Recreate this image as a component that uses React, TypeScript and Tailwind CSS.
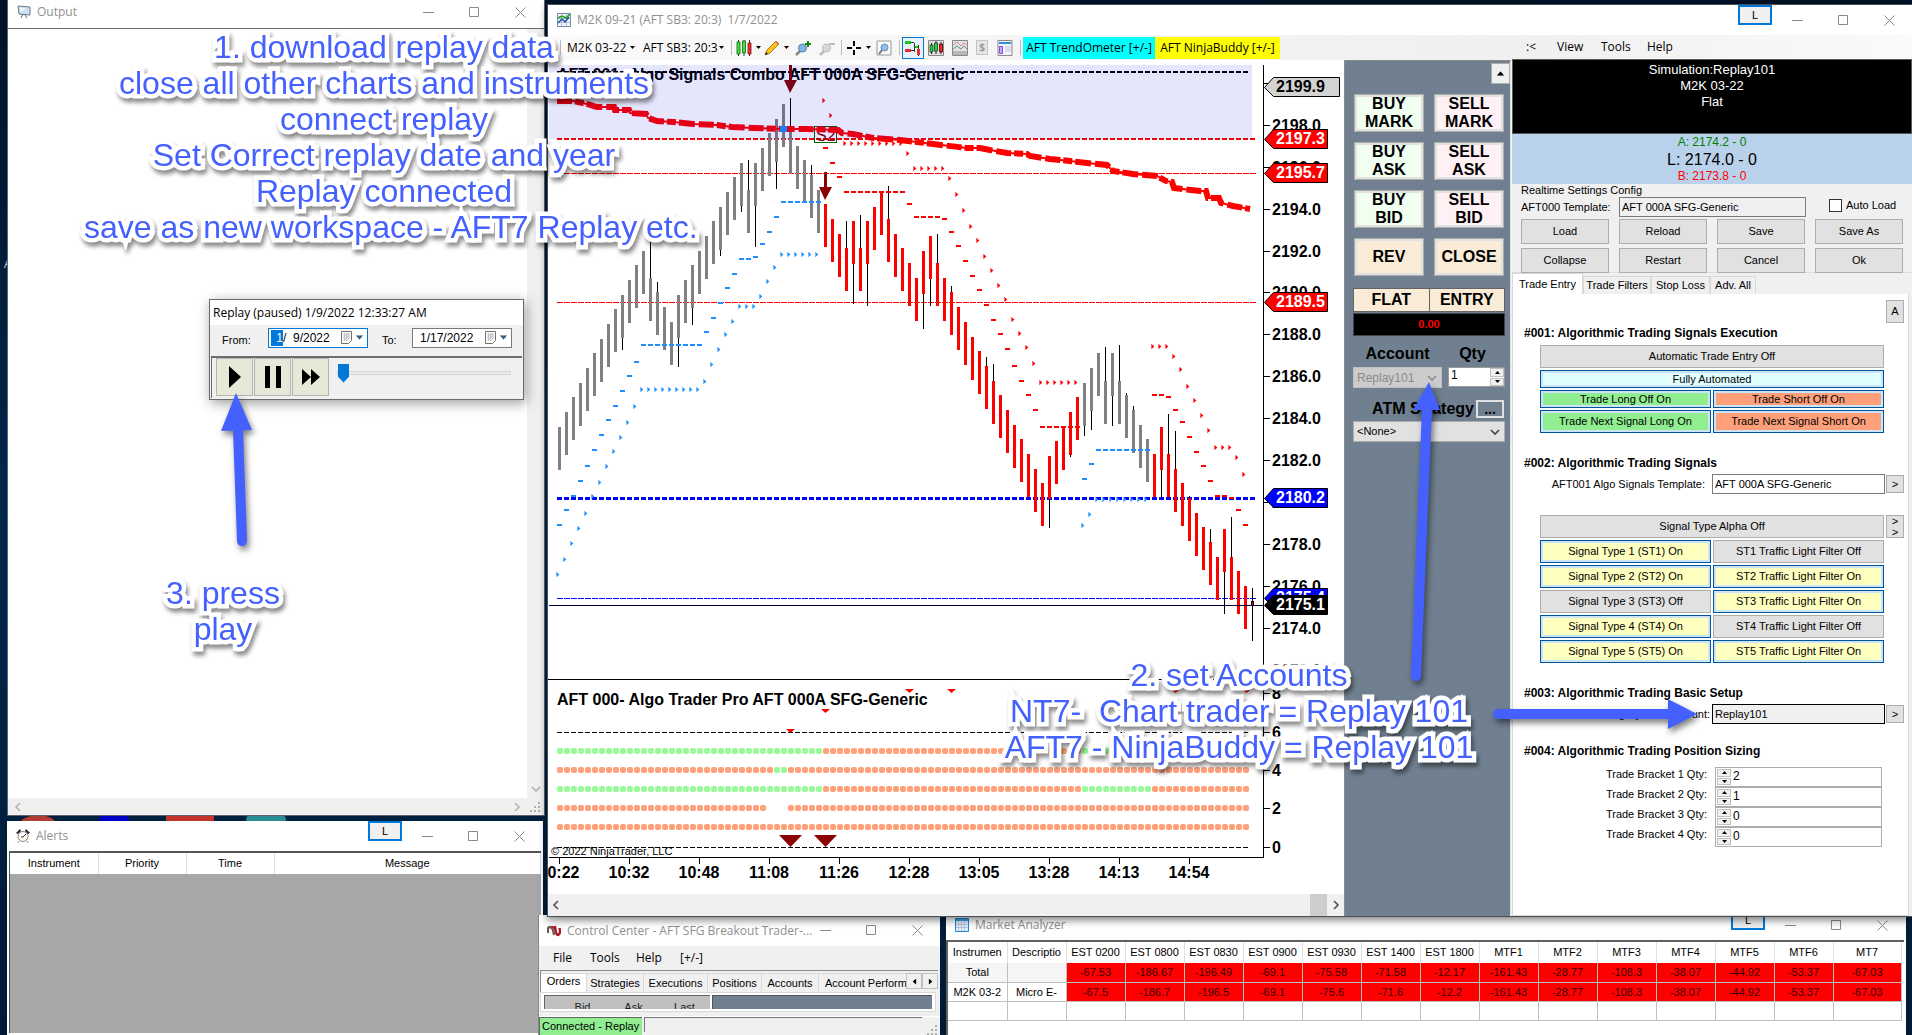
import React from 'react';
import clsx from 'clsx';

const UI = "font-['Open_Sans',sans-serif]";
const MS = "font-['Liberation_Sans',Arial,sans-serif]";

// ---------- chart data ----------

const STEP = 7;
const X0 = 559;

// top of every bar, left to right
const barTops = [
  427, 412, 397, 383, 368, 353, 339, 324, 309, 295, 280, 265, 251, 278, 292, 307, 322, 295, 280, 265,
  251, 236, 221, 207, 192, 177, 163, 190, 163, 148, 133, 119, 104, 131, 146, 160, 175, 190, 204, 219,
  234, 248, 221, 248, 221, 207, 192, 219, 234, 248, 263, 278, 251, 236, 263, 278, 292, 307, 322, 337,
  351, 366, 381, 395, 410, 425, 439, 454, 469, 483, 456, 441, 427, 412, 397, 383, 368, 353, 381, 353,
  381, 395, 410, 425, 439, 454, 427, 454, 469, 483, 498, 513, 527, 542, 557, 529, 557, 571, 586,
];

const wicks: [number, number][] = [
  [9, 350], [13, 240], [14, 282], [17, 367], [19, 325], [23, 256], [26, 212], [27, 160], [28, 247], [31, 189],
  [33, 98], [36, 165], [41, 221], [42, 304], [43, 215], [44, 306], [47, 186], [52, 329], [53, 306], [54, 234],
  [56, 286], [61, 357], [62, 364], [70, 528], [73, 457], [75, 436], [76, 430], [78, 347], [79, 426], [80, 345],
  [81, 393], [82, 406], [86, 498], [87, 414], [88, 431], [90, 496], [93, 529], [95, 614], [96, 517],
];

// [first bar, y values]
const blueDashes: [number, number[]][] = [
  [0, [525, 510, 496, 481, 466, 450, 435, 420, 406, 391, 376, 362, 345, 345, 345, 345, 345, 345, 345, 345, 345, 332, 318, 303, 288, 274, 259, 259, 257, 244, 232, 217, 202, 202, 202, 202, 202, 202]],
  [75, [479, 464, 450, 450, 450, 450, 450, 450, 450, 450]],
];
const blueMarks: [number, number[]][] = [
  [0, [574, 559, 543, 528, 513, 496, 482, 466, 451, 437, 422, 406, 389, 389, 389, 389, 389, 389, 389, 389, 389, 381, 364, 349, 334, 321, 306, 306, 306, 296, 281, 267, 254, 254, 254, 254, 254, 254]],
  [75, [525, 514, 499, 499, 499, 499, 499, 499, 499, 499]],
];
const redDashes: [number, number[]][] = [
  [38, [148, 163, 177, 192, 192, 192, 192, 192, 192, 192, 192, 192, 204, 217, 217, 217, 217, 219, 232, 246, 261, 276, 290, 305, 320, 334, 349, 366, 381, 395, 410, 427, 427, 427, 427, 427, 427]],
  [85, [395, 395, 397, 410, 422, 437, 452, 466, 481, 496, 496, 498, 510, 525]],
];
const redMarks: [number, number[]][] = [
  [38, [100, 115, 129, 143, 143, 143, 143, 143, 143, 143, 143, 143, 153, 168, 168, 168, 168, 168, 178, 194, 210, 226, 240, 256, 270, 285, 299, 319, 333, 347, 363, 382, 382, 382, 382, 382, 382]],
  [85, [346, 346, 346, 356, 369, 386, 400, 415, 430, 447, 447, 447, 457, 474]],
];

const trend =
  '557,101 573,101 587,104 597,107 614,107 615,110 629,110 630,113 646,114 648,118 657,121 673,122 693,124 717,125 732,127 753,128 783,129 807,129 838,130 842,133 853,134 873,138 900,140 933,144 967,148 980,148 990,150 1007,153 1027,154 1030,156 1050,159 1070,161 1087,163 1107,165 1113,171 1133,174 1157,176 1166,181 1172,182 1174,188 1200,191 1206,191 1208,198 1219,198 1221,203 1233,206 1250,209';

const axisLabels: [number, string][] = [
  [125, '2198.0'], [167, '2196.0'], [209, '2194.0'], [251, '2192.0'], [292, '2190.0'], [334, '2188.0'],
  [376, '2186.0'], [418, '2184.0'], [460, '2182.0'], [502, '2180.0'], [544, '2178.0'], [586, '2176.0'], [628, '2174.0'], [670, '2172.0'],
];

const priceTags = [
  { y: 87, text: '2199.9', fill: '#d3d3d3', color: '#000', right: 1340 },
  { y: 139, text: '2197.3', fill: '#f00', color: '#fff', right: 1328 },
  { y: 173, text: '2195.7', fill: '#f00', color: '#fff', right: 1328 },
  { y: 302, text: '2189.5', fill: '#f00', color: '#fff', right: 1328 },
  { y: 498, text: '2180.2', fill: '#00f', color: '#fff', right: 1328 },
  { y: 598, text: '2175.4', fill: '#00f', color: '#fff', right: 1328 },
  { y: 605, text: '2175.1', fill: '#000', color: '#fff', right: 1328 },
];

const times = ['10:22', '10:32', '10:48', '11:08', '11:26', '12:28', '13:05', '13:28', '14:13', '14:54'];

const inLong = (i: number) => i < 38 || (i >= 75 && i <= 84);
const dotRows = [
  { y: 751, color: (i: number) => (inLong(i) ? '#98fb98' : '#ffa07a') },
  { y: 770, color: (i: number) => (i === 31 || i === 32 ? '#98fb98' : '#ffa07a') },
  { y: 789, color: (i: number) => (inLong(i) ? '#98fb98' : '#ffa07a') },
  { y: 808, color: (i: number) => (i >= 30 && i <= 32 ? 'none' : '#ffa07a') },
  { y: 827, color: () => '#ffa07a' },
];

function Dashes({ data, fill }: { data: [number, number[]][]; fill: string }) {
  return (
    <g fill={fill}>
      {data.map(([start, ys]) =>
        ys.map((y, k) => <rect key={start + k} x={X0 + (start + k) * STEP - 2} y={y - 1} width="5" height="2" />)
      )}
    </g>
  );
}

function Marks({ data, fill, edge }: { data: [number, number[]][]; fill: string; edge: string }) {
  return (
    <g>
      {data.map(([start, ys]) =>
        ys.map((y, k) => {
          const x = X0 + (start + k) * STEP - 3;
          return (
            <g key={start + k}>
              <rect x={x} y={y - 2} width="1" height="5" fill={edge} />
              <path d={`M${x + 0.6} ${y - 2}l2.8 2.5l-2.8 2.5z`} fill={fill} />
            </g>
          );
        })
      )}
    </g>
  );
}

function PriceChart() {
  return (
    <svg viewBox="548 60 796 834" className="block h-[834px] w-[796px] shrink-0 bg-white" fontFamily="Liberation Sans, Arial, sans-serif">
      <text x="557" y="80" fontSize="16" fontWeight="700">AFT 001- Algo Signals Combo AFT 000A SFG-Generic</text>

      <g shapeRendering="crispEdges">
        <path d="M557 72H1248" stroke="#000" strokeWidth="2" strokeDasharray="5 2" />
        <path d="M557 139H1255" stroke="#f00" strokeWidth="2" strokeDasharray="5 2" />
        <path d="M557 173.5H1256M557 302.5H1256" stroke="#f00" strokeDasharray="6 1" />
        <path d="M557 498.5H1255" stroke="#00f" strokeWidth="3" strokeDasharray="5 2" />
        <path d="M557 598.5H1256" stroke="#00f" strokeDasharray="6 1" />

        {barTops.map((top, i) => (
          <rect key={i} x={X0 + i * STEP - 1} y={top} width="3" height="43" fill={inLong(i) ? '#808080' : '#f00'} />
        ))}
        {wicks.map(([i, end]) => {
          const top = barTops[i];
          const up = end < top;
          return <rect key={i} x={X0 + i * STEP} y={up ? end : top + 43} width="1" height={up ? top - end : end - top - 43} />;
        })}
        <rect x="1252" y="588" width="1" height="53" />
        <rect x="1251" y="601" width="3" height="5" />
        <rect x="1252" y="602" width="1" height="3" fill="#f00" />
        <path d="M549 605.5H1264" stroke="#000040" />

        <Dashes data={blueDashes} fill="#1e90ff" />
        <Dashes data={redDashes} fill="#f00" />
      </g>
      <Marks data={blueMarks} fill="#1e90ff" edge="#a5d3ff" />
      <Marks data={redMarks} fill="#f00" edge="#ff9c9c" />

      <rect x="814.5" y="126.5" width="22" height="16" fill="none" stroke="#006400" />
      <text x="816" y="141" fontSize="16" fill="#8b0000">S2</text>
      <polyline points={trend} fill="none" stroke="#f00" strokeWidth="6" strokeDasharray="15 3 9 3 16 4" />
      <polyline points={trend} fill="none" stroke="#f00" strokeWidth="2" />
      <rect x="780" y="126" width="7" height="6" fill="#1e90ff" />

      <g fill="#8b0000">
        <path d="M789 65h3v15h5l-7 13l-6 -13h5z" />
        <path d="M824 172h3v15h5l-7 13l-6 -13h5z" />
      </g>
      <rect x="549" y="65" width="703" height="74" fill="#0000e6" fillOpacity="0.1" />

      {/* lower indicator panel */}
      <path d="M548 679.5H1344" stroke="#000" />
      <text x="557" y="705" fontSize="16" fontWeight="700">AFT 000- Algo Trader Pro AFT 000A SFG-Generic</text>
      <path d="M557 732.5H1249M557 847.5H1249" stroke="#000" strokeDasharray="5 2" shapeRendering="crispEdges" />
      {dotRows.map((row) => (
        <g key={row.y}>
          {Array.from({ length: 99 }, (_, i) => (
            <rect key={i} x={X0 + i * STEP - 2} y={row.y - 3} width="6" height="6" rx="2" fill={row.color(i)} />
          ))}
        </g>
      ))}
      {[[790, 731], [825, 711], [909, 691], [951, 691], [1175, 691], [1246, 691]].map(([x, y]) => (
        <path key={x} d={`M${x - 4} ${y - 2}h9l-4.5 4z`} fill="#f00" />
      ))}
      <path d="M779 835h23l-11.500 12zM814 835h23l-11.500 12z" fill="#8b0000" />
      <text x="551" y="855" fontSize="11">© 2022 NinjaTrader, LLC</text>

      {/* axes */}
      <g stroke="#000" shapeRendering="crispEdges">
        <path d="M1263.5 65V858M549 857.5H1264" />
        {times.map((t, k) => (
          <path key={t} d={`M${559.5 + k * 70} 858v6`} />
        ))}
        {axisLabels.map(([y]) => (
          <path key={y} d={`M1264 ${y + 0.5}h6`} />
        ))}
        {[693, 732, 770, 808, 847].map((y) => (
          <path key={y} d={`M1264 ${y + 0.5}h6`} />
        ))}
        <path d="M1264 83.5h6" />
      </g>
      <g fontSize="16" fontWeight="700">
        {times.map((t, k) => (
          <text key={t} x={559 + k * 70} y="878" textAnchor="middle">{t}</text>
        ))}
        {axisLabels.map(([y, label]) => (
          <text key={label} x="1272" y={y + 6}>{label}</text>
        ))}
        {[[693, 8], [732, 6], [770, 4], [808, 2], [847, 0]].map(([y, n]) => (
          <text key={n} x="1272" y={y + 6}>{n}</text>
        ))}
        {priceTags.map((tag) => (
          <g key={tag.text}>
            <path d={`M1264.5 ${tag.y + 0.5}L1273.5 ${tag.y - 9.5}H${tag.right - 0.5}V${tag.y + 9.5}H1273.5Z`} fill={tag.fill} stroke="#000" />
            <text x="1276" y={tag.y + 5} fill={tag.color}>{tag.text}</text>
          </g>
        ))}
      </g>
    </svg>
  );
}

// ---------- window parts ----------

function WinButtons({ gap = 'gap-[35px]' }: { gap?: string }) {
  return (
    <div className={clsx('flex items-center text-[#8a8a8a]', gap)}>
      <button aria-label="Minimize" className="h-[11px] w-[11px]">
        <svg viewBox="0 0 11 11" className="h-[11px] w-[11px]"><path d="M0 5.5h11" stroke="currentColor" /></svg>
      </button>
      <button aria-label="Maximize" className="h-[11px] w-[11px]">
        <svg viewBox="0 0 11 11" className="h-[11px] w-[11px]"><path d="M.5 .5h9v9h-9z" fill="none" stroke="currentColor" /></svg>
      </button>
      <button aria-label="Close" className="h-[11px] w-[11px]">
        <svg viewBox="0 0 11 11" className="h-[11px] w-[11px]"><path d="M.5 .5l10 10M10.500 .5l-10 10" stroke="currentColor" /></svg>
      </button>
    </div>
  );
}

function LinkButton() {
  return (
    <button className={clsx('mr-5 h-5 w-[34px] self-start border-2 border-[#0078d7] bg-[#f0f0f0] text-[11px] leading-[15px] text-black', MS)}>L</button>
  );
}

function Caret({ className = 'text-black' }: { className?: string }) {
  return <svg viewBox="0 0 5 3" className={clsx('h-[3px] w-[5px] shrink-0', className)}><path d="M0 0h5L2.500 3z" fill="currentColor" /></svg>;
}

function Chevron({ dir, className }: { dir: 'left' | 'right' | 'down'; className?: string }) {
  const d = { left: 'M7 1L3 5l4 4', right: 'M3 1l4 4l-4 4', down: 'M1 3l4 4l4 -4' }[dir];
  return <svg viewBox="0 0 10 10" className={clsx('h-[10px] w-[10px] shrink-0', className)}><path d={d} fill="none" stroke="currentColor" strokeWidth="1.600" /></svg>;
}

function Grip() {
  return (
    <svg viewBox="0 0 10 10" className="h-[10px] w-[10px]" fill="#b0b0b0">
      <path d="M8 0h2v2h-2zM8 4h2v2h-2zM8 8h2v2h-2zM4 4h2v2h-2zM4 8h2v2h-2zM0 8h2v2h-2z" />
    </svg>
  );
}

function Spin({ className }: { className?: string }) {
  return (
    <span className={clsx('flex w-[14px] shrink-0 flex-col gap-px', className)}>
      <button aria-label="Up" className="flex flex-1 items-center justify-center border border-[#c0c0c0] bg-[#f0f0f0]"><Caret className="rotate-180" /></button>
      <button aria-label="Down" className="flex flex-1 items-center justify-center border border-[#c0c0c0] bg-[#f0f0f0]"><Caret /></button>
    </span>
  );
}

// ---------- Output + Alerts ----------

function OutputWindow() {
  return (
    <section className="absolute top-0 left-[7px] flex h-[816px] w-[538px] flex-col border-x border-b border-[#5a6470] bg-[#f0f0f0]">
      <div className="flex h-7 items-center bg-white pr-[18px] pb-1 pl-[9px]">
        <svg viewBox="0 0 14 14" className="h-[14px] w-[14px]">
          <path d="M1 1l12 1v8l-11 -1z" fill="#cfe0ee" stroke="#6c7c8c" />
          <path d="M6 9l-2 4M8 10l2 3" stroke="#666" />
          <path d="M3 3l6 .5l-5 3z" fill="#fff" />
        </svg>
        <span className="ml-[6px] flex-1 text-xs text-[#8f8f8f]">Output</span>
        <WinButtons />
      </div>
      <div className="flex flex-1 border-t border-[#696969]">
        <div className="flex-1 bg-white" />
        <div className="flex w-[17px] flex-col items-center justify-end pb-1 text-[#b4b4b4]"><Chevron dir="down" /></div>
      </div>
      <div className="flex h-[17px] items-center justify-between pr-1 pl-[5px] text-[#b4b4b4]">
        <Chevron dir="left" />
        <span className="flex items-center gap-2"><Chevron dir="right" /><Grip /></span>
      </div>
    </section>
  );
}

function AlertsWindow() {
  return (
    <section className="absolute top-[821px] bottom-0 left-[7px] flex w-[536px] flex-col bg-white">
      <div className="flex h-[30px] items-center pr-[18px] pl-[9px]">
        <svg viewBox="0 0 14 14" className="h-[14px] w-[14px]">
          <path d="M0 4L4 0L5 2L2 5zM14 4L10 0L9 2L12 5z" fill="#222" />
          <circle cx="7" cy="7.500" r="5" fill="#fff" stroke="#8a8078" />
          <path d="M7 8l3 -3M7 8h-2" stroke="#333" />
          <path d="M3 10l1 1M10 11l1 -1" stroke="#e08020" />
          <path d="M3 12l-1 2M11 12l1 2" stroke="#999" />
        </svg>
        <span className="ml-[6px] flex-1 text-xs text-[#8f8f8f]">Alerts</span>
        <LinkButton />
        <WinButtons />
      </div>
      <div className="mx-[2px] mb-[2px] flex flex-1 flex-col border-t-2 border-l border-[#555] bg-[#a8a8a8]">
        <table className={clsx('w-full table-fixed border-collapse bg-white text-xs', MS)}>
          <colgroup><col className="w-[88px]" /><col className="w-[88px]" /><col className="w-[88px]" /><col /></colgroup>
          <thead>
            <tr className="h-[21px]">
              {['Instrument', 'Priority', 'Time', 'Message'].map((h) => (
                <th key={h} className="border-r border-[#e0e0e0] p-0 text-[11px] font-normal">{h}</th>
              ))}
            </tr>
          </thead>
        </table>
      </div>
    </section>
  );
}

// ---------- Replay ----------

function CalendarButton() {
  return (
    <button aria-label="Open calendar" className="flex items-center gap-[5px]">
      <svg viewBox="0 0 11 13" className="h-[13px] w-[11px]">
        <path d="M.5 .5h10v9l-3 3h-7z" fill="#fff" stroke="#7a6f6a" />
        <path d="M2 3h7M2 5h7M2 7h7M2 9h5M3.500 2v8M5.500 2v8M7.500 2v6" stroke="#a0a8c0" strokeWidth=".6" />
      </svg>
      <Caret className="scale-150 text-[#41597d]" />
    </button>
  );
}

function ReplayWindow() {
  const btn = 'flex h-[38px] w-[37px] items-center justify-center border border-[#b4b4b4] bg-[#e8e8d8]';
  return (
    <section className="absolute top-[299px] left-[209px] w-[315px] border border-[#6a6a6a] bg-[#f0f0f0] shadow-[2px_3px_12px_rgba(0,0,0,0.4)]">
      <h2 className="flex h-[25px] items-center bg-white pl-[3px] text-xs">Replay (paused) 1/9/2022 12:33:27 AM</h2>
      <div className={clsx('flex h-[31px] items-center pl-3 text-xs', MS)}>
        <label htmlFor="from" className="w-[46px] text-[11px]">From:</label>
        <div className="mb-[6px] flex h-5 w-[100px] items-center border border-[#0078d7] bg-white pl-[2px]">
          <input aria-label="From month" defaultValue="1" className="h-4 w-3 bg-[#0078d7] p-0 text-right text-white" />
          <input id="from" defaultValue="/  9/2022" className="w-[58px] p-0" />
          <CalendarButton />
        </div>
        <label htmlFor="to" className="ml-[14px] w-[30px] text-[11px]">To:</label>
        <div className="mb-[6px] flex h-5 w-[100px] items-center border border-[#7a7a7a] bg-white pl-[7px]">
          <input id="to" defaultValue="1/17/2022" className="w-[65px] p-0" />
          <CalendarButton />
        </div>
      </div>
      <div className="mx-px mb-px flex h-[42px] items-start border-t-2 border-l border-[#6d6d6d] pl-1">
        <button aria-label="Play" className={btn}><svg viewBox="0 0 12 22" className="h-[22px] w-3"><path d="M0 0l12 11L0 22z" /></svg></button>
        <button aria-label="Pause" className={clsx(btn, 'ml-px')}><svg viewBox="0 0 16 22" className="h-[22px] w-4"><path d="M0 0h5v22h-5zM11 0h5v22h-5z" /></svg></button>
        <button aria-label="Fast forward" className={clsx(btn, 'ml-px')}><svg viewBox="0 0 18 16" className="h-4 w-[18px]"><path d="M0 0l9 8l-9 8zM9 0l9 8l-9 8z" /></svg></button>
        <input
          type="range"
          aria-label="Replay speed"
          defaultValue={0}
          className="mt-[5px] ml-2 h-[19px] w-[174px] appearance-none bg-transparent [&::-webkit-slider-runnable-track]:h-1 [&::-webkit-slider-runnable-track]:border [&::-webkit-slider-runnable-track]:border-[#d6d6d6] [&::-webkit-slider-runnable-track]:bg-[#e7eaea] [&::-webkit-slider-thumb]:-mt-2 [&::-webkit-slider-thumb]:h-[19px] [&::-webkit-slider-thumb]:w-[11px] [&::-webkit-slider-thumb]:appearance-none [&::-webkit-slider-thumb]:bg-[#0078d7] [&::-webkit-slider-thumb]:[clip-path:polygon(0_0,100%_0,100%_70%,50%_100%,0_70%)]"
        />
      </div>
    </section>
  );
}

// ---------- chart toolbar ----------

function Sep() {
  return <span className="flex w-[6px] shrink-0 justify-center"><span className="h-[15px] w-px bg-[#bdbdbd]" /></span>;
}

function CandleIcon() {
  return (
    <svg viewBox="0 0 16 16" className="h-4 w-4">
      <path d="M2.500 0v16M8 0v16M13.500 0v16" stroke="#333" />
      <path d="M1 2h3v12h-3zM6.500 1h3v12h-3z" fill="#3be83b" stroke="#145c14" strokeWidth=".8" />
      <path d="M12 3h3v11h-3z" fill="#f03030" stroke="#7a1010" strokeWidth=".8" />
    </svg>
  );
}

function Toolbar() {
  const icon = 'flex h-6 shrink-0 items-center justify-center';
  return (
    <div className="flex h-[25px] items-center bg-gradient-to-r from-[#fafafa] to-[#f0f0f0] text-xs">
      <span className="ml-[3px] h-4 border-l-2 border-dotted border-[#aaa]" />
      <span className="ml-[7px] h-[15px] w-px bg-[#bdbdbd]" />
      <button className="flex w-[77px] shrink-0 items-center justify-between pr-[3px] pl-[6px] whitespace-nowrap">M2K 03-22 <Caret /></button>
      <button className="flex w-[90px] shrink-0 items-center justify-between pr-1 pl-[5px] whitespace-nowrap">AFT SB3: 20:3 <Caret /></button>
      <Sep />
      <button aria-label="Chart style" className={clsx(icon, 'w-7 gap-1')}><CandleIcon /><Caret /></button>
      <button aria-label="Draw" className={clsx(icon, 'w-[29px] gap-1')}>
        <svg viewBox="0 0 16 16" className="h-4 w-4"><path d="M1 15l2 -5l9 -9l3 3l-9 9z" fill="#ffc61a" stroke="#b07a10" /><path d="M1 15l1 -3l2 2z" fill="#222" /><path d="M11 2l1 -1l3 3l-1 1z" fill="#e0705a" /></svg>
        <Caret />
      </button>
      <button aria-label="Zoom in" className={clsx(icon, 'w-6')}>
        <svg viewBox="0 0 16 16" className="h-4 w-4"><path d="M1 15l5 -5" stroke="#888" strokeWidth="2.500" /><circle cx="7.500" cy="8" r="4" fill="#7db4e8" stroke="#5f7f9f" /><path d="M13 1v6M10 4h6" stroke="#0c8a0c" strokeWidth="2" /></svg>
      </button>
      <button aria-label="Zoom out" className={clsx(icon, 'w-[23px]')}>
        <svg viewBox="0 0 16 16" className="h-4 w-4"><path d="M1 15l5 -5" stroke="#bbb" strokeWidth="2.500" /><circle cx="7.500" cy="8" r="4" fill="#d8d8d8" stroke="#bbb" /><path d="M10 4h6" stroke="#bbb" strokeWidth="2" /></svg>
      </button>
      <Sep />
      <button aria-label="Crosshair" className={clsx(icon, 'w-7 gap-1')}>
        <svg viewBox="0 0 16 16" className="h-4 w-4"><path d="M8 1v5M8 10v5M1 8h5M10 8h5" stroke="#000" strokeWidth="2" /></svg>
        <Caret />
      </button>
      <button aria-label="Data box" className={clsx(icon, 'w-6')}>
        <svg viewBox="0 0 16 16" className="h-4 w-4"><path d="M1 1h14v14h-14z" fill="#fafafa" stroke="#999" /><path d="M3 14l3 -4" stroke="#777" strokeWidth="2" /><circle cx="8.500" cy="7.500" r="3.500" fill="#8fc0ee" stroke="#6a8cae" /></svg>
      </button>
      <Sep />
      <button aria-label="Chart trader" className="flex h-[22px] w-[22px] shrink-0 items-center justify-center border border-[#0078d7] bg-[#e8f2fb]">
        <svg viewBox="0 0 16 16" className="h-4 w-4"><path d="M0 2.500h9M9.500 3v9M0 10.500h9M13.500 5v11" stroke="#333" fill="none" /><path d="M0 1h6v3h-6z" fill="#18c818" /><path d="M0 9h6v3h-6z" fill="#e03030" /><path d="M10 8h3v-2h-3z" fill="#18c818" /><path d="M12 9h3v6h-3z" fill="#f03030" /></svg>
      </button>
      <button aria-label="Data series" className={clsx(icon, 'w-6')}>
        <svg viewBox="0 0 16 16" className="h-4 w-4"><path d="M.5 .5h15v15h-15z" fill="#ddd" stroke="#888" /><path d="M3.500 3v11M8 1v13M13 2v12" stroke="#222" /><path d="M2 5h3v7h-3zM6.500 3h3v8h-3z" fill="#28d828" stroke="#123" strokeWidth=".7" /><path d="M11.500 4h3v8h-3z" fill="#f02020" stroke="#300" strokeWidth=".7" /></svg>
      </button>
      <button aria-label="Indicators" className={clsx(icon, 'w-[23px]')}>
        <svg viewBox="0 0 16 16" className="h-4 w-4"><path d="M.5 .5h15v15h-15z" fill="#e2e2e2" stroke="#888" /><path d="M1 5l4 -3l4 4l3 -3l3 2" stroke="#d88" fill="none" /><path d="M1 9l4 -3l4 3l3 -3l3 3" stroke="#5a9c80" fill="none" /><path d="M1 11h14v4h-14z" fill="#b8b8b8" /></svg>
      </button>
      <button aria-label="Strategies" className={clsx(icon, 'w-[22px] text-[10px] font-bold text-[#999]')}>
        <span className="h-[15px] w-3 border border-[#c4c4c4] bg-[#e6e6e6] leading-[13px]">$</span>
      </button>
      <button aria-label="Properties" className={clsx(icon, 'w-6')}>
        <svg viewBox="0 0 16 16" className="h-4 w-4"><path d="M1 .5h14v15h-14z" fill="#f4f4fb" stroke="#888" /><path d="M2 2h12v2h-12z" fill="#2f8fd8" /><path d="M2.500 6.500h3v7h-3z" fill="#c8a8ff" stroke="#8848e0" /><path d="M8 7h6M8 9h6M8 11h6" stroke="#c0c4d8" /></svg>
      </button>
      <Sep />
      <button className="h-[22px] w-[132px] shrink-0 bg-[#00ffff] whitespace-nowrap">AFT TrendOmeter [+/-]</button>
      <button className="h-[22px] w-[125px] shrink-0 bg-[#ffff00] whitespace-nowrap">AFT NinjaBuddy [+/-]</button>
    </div>
  );
}

// ---------- chart trader ----------

const orderButtons = [
  { top: 'BUY', bottom: 'MARK', bg: 'bg-[#f0fff0]' },
  { top: 'SELL', bottom: 'MARK', bg: 'bg-[#fff0f5]' },
  { top: 'BUY', bottom: 'ASK', bg: 'bg-[#f0fff0]' },
  { top: 'SELL', bottom: 'ASK', bg: 'bg-[#fff0f5]' },
  { top: 'BUY', bottom: 'BID', bg: 'bg-[#f0fff0]' },
  { top: 'SELL', bottom: 'BID', bg: 'bg-[#fff0f5]' },
  { top: 'REV', bg: 'bg-[#faebd7]' },
  { top: 'CLOSE', bg: 'bg-[#faebd7]' },
];

function ChartTrader() {
  return (
    <aside className={clsx('flex w-[167px] shrink-0 flex-col border-t border-r border-l border-t-[#8a8a8a] border-r-[#e4e4e4] border-l-[#8a8a8a] bg-[#708090] text-base font-bold', MS)}>
      <button aria-label="Scroll up" className="mt-[2px] flex h-[21px] w-[19px] items-center justify-center self-end border border-[#adadad] bg-[#f0f0f0]">
        <Caret className="scale-150 rotate-180" />
      </button>
      <div className="mt-[10px] grid grid-cols-2 gap-[10px] pr-[6px] pl-[9px]">
        {orderButtons.map((b, i) => (
          <button key={i} className={clsx('flex h-[38px] flex-col items-center justify-center border border-[#adadad] leading-[18px] shadow-[inset_0_0_0_2px_#e1e1e1]', b.bg)}>
            <span>{b.top}</span>
            {b.bottom && <span>{b.bottom}</span>}
          </button>
        ))}
      </div>
      <div className="mt-3 mr-[5px] ml-2 flex h-6 border border-[#646464] bg-[#faebd7] leading-[22px]">
        <button className="flex-1 border-r border-[#646464]">FLAT</button>
        <button className="flex-1">ENTRY</button>
      </div>
      <div className="mt-px mr-[5px] ml-2 flex h-[23px] items-center justify-center border border-[#444] bg-black text-[11px] text-[#f00]">0.00</div>

      <div className="mt-[9px] mr-[5px] ml-2 flex">
        <div className="w-[89px]">
          <label htmlFor="account" className="block text-center leading-[18px]">Account</label>
          <div className="mt-1 flex h-[21px] items-center border border-[#bfbfbf] bg-[#ccc] pr-1 text-[#8a8a8a]">
            <select id="account" disabled className="w-full appearance-none pl-[3px] text-xs font-normal">
              <option>Replay101</option>
            </select>
            <Chevron dir="down" />
          </div>
        </div>
        <div className="ml-[6px] flex-1">
          <label htmlFor="qty" className="block pr-2 text-center leading-[18px]">Qty</label>
          <div className="mt-1 flex h-5 border border-[#999] bg-white">
            <input id="qty" defaultValue="1" inputMode="numeric" className="w-full min-w-0 pb-1 pl-[2px] text-xs font-normal" />
            <Spin />
          </div>
        </div>
      </div>

      <div className="mt-3 mr-[6px] ml-2 flex h-[18px] items-center justify-end">
        <label htmlFor="atm">ATM Strategy</label>
        <button className="ml-[2px] h-[18px] w-7 border-2 border-[#e1e1e1] text-sm leading-[8px]">...</button>
      </div>
      <div className="mt-[3px] mr-[5px] ml-2 flex h-[21px] items-center border border-[#adadad] bg-[#e1e1e1] pr-1 text-[#444]">
        <select id="atm" className="w-full appearance-none pl-[3px] text-[11px] font-normal text-black">
          <option>{'<None>'}</option>
        </select>
        <Chevron dir="down" />
      </div>
    </aside>
  );
}

// ---------- NinjaBuddy settings ----------

const tones = {
  off: 'border border-[#adadad] bg-[#e1e1e1]',
  cyan: 'border border-[#005499] bg-[#e0ffff] shadow-[inset_0_0_0_2px_#cce4f7]',
  green: 'border border-[#005499] bg-[#90ee90] shadow-[inset_0_0_0_2px_#cce4f7]',
  salmon: 'border border-[#005499] bg-[#ffa07a] shadow-[inset_0_0_0_2px_#cce4f7]',
  yellow: 'border border-[#005499] bg-[#ffffc0] shadow-[inset_0_0_0_2px_#cce4f7]',
};

function Toggle({ tone, short, wide, children }: { tone: keyof typeof tones; short?: boolean; wide?: boolean; children: React.ReactNode }) {
  return <button className={clsx('text-center', short ? 'h-[18px]' : 'h-[23px]', wide && 'col-span-2', tones[tone])}>{children}</button>;
}

const signalRows = [1, 2, 3, 4, 5].map((n) => ({
  n,
  signal: n !== 3,
  filter: n !== 1 && n !== 4,
}));

function SettingsPanel() {
  const tab = 'h-[18px] border border-b-0 border-[#d9d9d9] bg-[#f0f0f0] text-center';
  const heading = 'pl-[11px] text-xs leading-4 font-bold';
  const side = 'w-[18px] shrink-0 border border-[#adadad] bg-[#e1e1e1] leading-none';
  return (
    <aside className={clsx('flex w-[401px] shrink-0 flex-col border-l border-[#f0f0f0] bg-[#f0f0f0] text-[11px]', MS)}>
      <nav className={clsx('flex h-[24px] items-center bg-gradient-to-r from-[#f0f0f0] to-[#fafafa] pl-[14px] text-xs', UI)}>
        <button className="w-[31px] text-left">:&lt;</button>
        <button className="w-[44px] text-left">View</button>
        <button className="w-[46px] text-left">Tools</button>
        <button>Help</button>
      </nav>
      <div className="h-[75px] border border-[#5a5a5a] bg-black pt-[2px] text-center text-[13px] leading-4 text-white">
        <p>Simulation:Replay101</p>
        <p>M2K 03-22</p>
        <p>Flat</p>
      </div>
      <div className="h-[50px] bg-[#b9d1ea] text-center text-xs leading-4">
        <p className="text-[#008000]">A: 2174.2 - 0</p>
        <p className="text-base leading-5">L: 2174.0 - 0</p>
        <p className="leading-3 text-[#f00]">B: 2173.8 - 0</p>
      </div>

      <fieldset className="h-[89px] border-b border-[#dcdcdc] px-[9px]">
        <legend className="h-[13px] leading-[13px]">Realtime Settings Config</legend>
        <div className="flex h-5 items-center">
          <label htmlFor="template" className="w-[98px]">AFT000 Template:</label>
          <input id="template" defaultValue="AFT 000A SFG-Generic" className="h-5 w-[187px] border border-[#7a7a7a] bg-[#f0f0f0] px-[2px]" />
          <label className="ml-[23px] flex items-center gap-1 pb-1">
            <input type="checkbox" className="h-[13px] w-[13px] appearance-none border border-[#333] bg-white" />
            Auto Load
          </label>
        </div>
        <div className="mt-[2px] grid grid-cols-4 gap-x-[10px] gap-y-1">
          {['Load', 'Reload', 'Save', 'Save As', 'Collapse', 'Restart', 'Cancel', 'Ok'].map((b) => (
            <button key={b} className="h-[25px] border border-[#adadad] bg-[#e1e1e1]">{b}</button>
          ))}
        </div>
      </fieldset>

      <div className="flex h-[21px] items-end">
        <button className="h-[21px] w-[71px] border-t border-r border-l border-[#d9d9d9] bg-white">Trade Entry</button>
        <button className={clsx(tab, 'w-[68px]')}>Trade Filters</button>
        <button className={clsx(tab, 'w-[59px]')}>Stop Loss</button>
        <button className={clsx(tab, 'w-[46px]')}>Adv. All</button>
      </div>
      <div className="mr-[3px] flex flex-1 flex-col border border-t-0 border-[#d9d9d9] bg-white pt-[6px]">
        <button className="mr-1 h-[23px] w-[18px] self-end border border-[#adadad] bg-[#e1e1e1]">A</button>

        <h3 className={clsx(heading, 'mt-[2px]')}>#001: Algorithmic Trading Signals Execution</h3>
        <div className="mt-1 mr-6 ml-[27px] grid grid-cols-2 gap-[2px]">
          <Toggle tone="off" wide>Automatic Trade Entry Off</Toggle>
          <Toggle tone="cyan" short wide>Fully Automated</Toggle>
          <Toggle tone="green" short>Trade Long Off On</Toggle>
          <Toggle tone="salmon" short>Trade Short Off On</Toggle>
          <Toggle tone="green">Trade Next Signal Long On</Toggle>
          <Toggle tone="salmon">Trade Next Signal Short On</Toggle>
        </div>

        <h3 className={clsx(heading, 'mt-[22px]')}>#002: Algorithmic Trading Signals</h3>
        <div className="mt-[3px] mr-1 flex h-5 items-center">
          <label htmlFor="algo" className="flex-1 pr-[7px] text-right">AFT001 Algo Signals Template:</label>
          <input id="algo" defaultValue="AFT 000A SFG-Generic" className="h-5 w-[173px] border border-[#7a7a7a] px-[2px]" />
          <button className={clsx(side, 'ml-px h-[18px]')}>&gt;</button>
        </div>
        <div className="mt-[21px] mr-1 ml-[27px] flex gap-[2px]">
          <div className="grid flex-1 grid-cols-2 gap-[2px]">
            <Toggle tone="off" wide>Signal Type Alpha Off</Toggle>
            {signalRows.map(({ n, signal, filter }) => (
              <React.Fragment key={n}>
                <Toggle tone={signal ? 'yellow' : 'off'}>{`Signal Type ${n} (ST${n}) ${signal ? 'On' : 'Off'}`}</Toggle>
                <Toggle tone={filter ? 'yellow' : 'off'}>{`ST${n} Traffic Light Filter ${filter ? 'On' : 'Off'}`}</Toggle>
              </React.Fragment>
            ))}
          </div>
          <button className={clsx(side, 'flex h-[23px] flex-col items-center')}><span>&gt;</span><span>&gt;</span></button>
        </div>

        <h3 className={clsx(heading, 'mt-[22px]')}>#003: Algorithmic Trading Basic Setup</h3>
        <div className="mt-[3px] mr-1 flex h-5 items-center">
          <label htmlFor="acct" className="flex-1 pr-[2px] text-right">Trading System Account:</label>
          <input id="acct" defaultValue="Replay101" className="h-5 w-[173px] border border-black bg-[#f0f0f0] px-[2px]" />
          <button className={clsx(side, 'ml-px h-[18px]')}>&gt;</button>
        </div>

        <h3 className={clsx(heading, 'mt-[19px]')}>#004: Algorithmic Trading Position Sizing</h3>
        <div className="mt-2 mr-[26px]">
          {[2, 1, 0, 0].map((qty, i) => (
            <div key={i} className="flex h-5">
              <label htmlFor={`bracket${i}`} className="flex-1 pr-2 text-right leading-[15px]">Trade Bracket {i + 1} Qty:</label>
              <div className="flex h-[20px] w-[167px] border border-[#abadb3] py-px pl-px">
                <Spin />
                <input id={`bracket${i}`} defaultValue={qty} inputMode="numeric" className="w-full min-w-0 pb-[2px] pl-[2px] text-xs" />
              </div>
            </div>
          ))}
        </div>
      </div>
    </aside>
  );
}

function ChartWindow() {
  return (
    <section className="absolute top-1 right-0 left-[547px] z-10 border border-r-0 border-[#46505c] bg-white shadow-[0_3px_8px_rgba(0,0,0,0.5)]">
      <div className="flex h-[30px] items-center pr-[17px] pl-[9px]">
        <svg viewBox="0 0 14 14" className="h-[14px] w-[14px]">
          <path d="M.5 .5h13v13h-13z" fill="#eef2fa" stroke="#7c8cb0" />
          <path d="M4.500 1v12M9.500 1v12M1 5.500h12M1 9.500h12" stroke="#b8c4dc" />
          <path d="M1 5l4 -2l4 2l4 -4" fill="none" stroke="#18a018" strokeWidth="1.500" />
          <path d="M1 10l4 -4l3 3l4 -5" fill="none" stroke="#1c4f9c" strokeWidth="1.500" />
        </svg>
        <span className="ml-[6px] flex-1 text-xs whitespace-pre text-[#8f8f8f]">M2K 09-21 (AFT SB3: 20:3)  1/7/2022</span>
        <LinkButton />
        <WinButtons />
      </div>
      <div className="flex">
        <div className="min-w-0 flex-1">
          <Toolbar />
          <div className="flex">
            <div className="min-w-0 flex-1">
              <PriceChart />
              <div className="flex h-[22px] items-center bg-[#f0f0f0] px-[3px] text-[#505050]">
                <Chevron dir="left" />
                <span className="ml-auto h-[22px] w-[17px] bg-[#cdcdcd]" />
                <Chevron dir="right" className="ml-1" />
              </div>
            </div>
            <ChartTrader />
          </div>
        </div>
        <SettingsPanel />
      </div>
    </section>
  );
}

// ---------- bottom windows ----------

function ControlCenter() {
  const tab = 'h-[19px] shrink-0 overflow-hidden border-t border-r border-[#d9d9d9] text-center whitespace-nowrap';
  return (
    <section className="absolute top-[915px] bottom-0 left-[538px] w-[402px] overflow-hidden border-l border-[#888] bg-[#f0f0f0] text-xs">
      <div className="flex h-[31px] items-center bg-white pr-[17px] pl-2">
        <svg viewBox="0 0 14 12" className="h-3 w-[14px]" fill="none">
          <path d="M1 8Q0 2 3 2Q6 2 7 10" stroke="#6e5a50" strokeWidth="2.400" />
          <path d="M4.500 1.500Q8 2 8.500 6Q9 10 11 10" stroke="#b01828" strokeWidth="1.600" />
          <path d="M8 1Q9 10 11 10Q14 9 12.500 3" stroke="#b01828" strokeWidth="2.400" />
        </svg>
        <span className="ml-[6px] flex-1 whitespace-nowrap text-[#8f8f8f]">Control Center - AFT SFG Breakout Trader-...</span>
        <WinButtons />
      </div>
      <nav className="flex h-[24px] items-center pl-[14px]">
        <button className="w-[37px] text-left">File</button>
        <button className="w-[46px] text-left">Tools</button>
        <button className="w-[44px] text-left">Help</button>
        <button>[+/-]</button>
      </nav>
      <div className={clsx('mr-[2px] ml-px flex h-[22px] items-end border-t border-l border-[#8a8a8a] text-[11px]', MS)}>
        <button className={clsx(tab, 'h-5 w-[46px] bg-white pb-1')}>Orders</button>
        <button className={clsx(tab, 'w-[57px]')}>Strategies</button>
        <button className={clsx(tab, 'w-[64px]')}>Executions</button>
        <button className={clsx(tab, 'w-[54px]')}>Positions</button>
        <button className={clsx(tab, 'w-[57px]')}>Accounts</button>
        <button className={clsx(tab, 'flex-1 shrink border-r-0 pl-[6px] text-left')}>Account Perform</button>
        <button aria-label="Previous tabs" className="mb-[3px] flex h-4 w-4 shrink-0 items-center justify-center border border-[#c0c0c0] bg-[#f0f0f0]"><Caret className="rotate-90 scale-125" /></button>
        <button aria-label="Next tabs" className="mb-[3px] flex h-4 w-4 shrink-0 items-center justify-center border border-[#c0c0c0] bg-[#f0f0f0]"><Caret className="-rotate-90 scale-125" /></button>
      </div>
      <div className={clsx('mr-1 ml-px flex h-5 gap-[2px] border border-[#d9d9d9] bg-white px-[3px] pt-[2px] pb-[2px] text-[11px]', MS)}>
        <div className="flex w-[166px] overflow-hidden border-t border-l border-[#666] bg-[#c0c0c0] pt-[5px] text-center leading-[13px] text-[#222]">
          <span className="flex-1 pl-3">Bid</span><span className="flex-1">Ask</span><span className="flex-1">Last</span>
        </div>
        <div className="flex-1 border-t border-l border-[#555] bg-[#708090]" />
      </div>
      <div className={clsx('mt-1 flex h-[19px] border-t border-[#fff] pr-[3px]', MS)}>
        <span className="w-[103px] border-t border-l border-[#666] bg-[#90ee90] pl-[2px] text-[11px] leading-[16px] whitespace-nowrap">Connected - Replay</span>
        <span className="ml-[2px] h-[15px] flex-1 border-t border-l border-[#777]" />
        <span className="ml-[5px] self-end"><Grip /></span>
      </div>
    </section>
  );
}

const columns = ['Instrumen', 'Descriptio', 'EST 0200', 'EST 0800', 'EST 0830', 'EST 0900', 'EST 0930', 'EST 1400', 'EST 1800', 'MTF1', 'MTF2', 'MTF3', 'MTF4', 'MTF5', 'MTF6', 'MT7'];
const rows = [
  ['Total', '', '-67.53', '-186.67', '-196.49', '-69.1', '-75.58', '-71.58', '-12.17', '-161.43', '-28.77', '-108.3', '-38.07', '-44.92', '-53.37', '-67.03'],
  ['M2K 03-2', 'Micro E-', '-67.5', '-186.7', '-196.5', '-69.1', '-75.6', '-71.6', '-12.2', '-161.43', '-28.77', '-108.3', '-38.07', '-44.92', '-53.37', '-67.03'],
  Array(16).fill(''),
];

function MarketAnalyzer() {
  return (
    <section className="absolute right-[6px] bottom-0 left-[946px] flex h-[125px] flex-col overflow-hidden bg-white">
      <div className="flex h-[30px] items-center pr-[18px] pl-[9px]">
        <svg viewBox="0 0 14 14" className="h-[14px] w-[14px]">
          <path d="M.5 .5h13v13h-13z" fill="#e4ecf8" stroke="#1c86d8" />
          <path d="M1 1h12v2h-12z" fill="#38a8f0" />
          <path d="M3.500 4v9M6.500 4v9M9.500 4v9M1 6.500h12M1 9.500h12" stroke="#a9b8d8" strokeWidth=".7" />
        </svg>
        <span className="ml-[6px] flex-1 text-xs text-[#8f8f8f]">Market Analyzer</span>
        <LinkButton />
        <WinButtons />
      </div>
      <div className="mr-[2px] flex-1 border-t-2 border-l-2 border-[#606060]">
        <table className={clsx('table-fixed border-collapse text-[11px]', MS)}>
          <colgroup>
            {columns.map((c) => <col key={c} className={c === 'MT7' ? 'w-[68px]' : 'w-[59px]'} />)}
          </colgroup>
          <thead>
            <tr className="h-[21px]">
              {columns.map((c) => <th key={c} className="border-r border-[#e0e0e0] p-0 font-normal">{c}</th>)}
            </tr>
          </thead>
          <tbody>
            {rows.map((r, ri) => (
              <tr key={ri} className="h-[19px]">
                {r.map((v: string, ci: number) => (
                  <td
                    key={ci}
                    className={clsx('border-r border-b border-[#c0c0c0] p-0 text-center leading-4', ri < 2 && ci > 1 && 'bg-[#f00] text-[#3a0000]', ri === 0 && ci < 2 && 'bg-[#f5f5f5]')}
                  >
                    {v}
                  </td>
                ))}
              </tr>
            ))}
          </tbody>
        </table>
      </div>
    </section>
  );
}

// ---------- notes drawn over the desktop ----------

function Note({ lines, className }: { lines: string[]; className: string }) {
  return (
    <div className={clsx('absolute text-center text-[32px] leading-9 whitespace-pre text-[#4460ff] drop-shadow-[2px_4px_2px_rgba(0,0,0,0.45)] [-webkit-text-stroke:9px_white] [paint-order:stroke] [stroke-linejoin:round]', MS, className)}>
      {lines.map((l) => <p key={l}>{l}</p>)}
    </div>
  );
}

function Notes() {
  return (
    <div className="pointer-events-none absolute inset-0 z-20 overflow-hidden">
      <Note
        className="top-[29px] left-[84px] w-[600px]"
        lines={['1. download replay data', 'close all other charts and instruments', 'connect replay', 'Set Correct replay date and year', 'Replay connected', 'save as new workspace - AFT7 Replay etc.']}
      />
      <Note className="top-[575px] left-[123px] w-[200px]" lines={['3. press', 'play']} />
      <Note className="top-[657px] left-[939px] w-[600px]" lines={['2. set Accounts', 'NT7-  Chart trader = Replay 101', 'AFT7 - NinjaBuddy = Replay 101']} />
      <svg viewBox="0 0 1912 1035" className="absolute top-0 left-0 h-[1035px] w-[1912px] drop-shadow-[2px_4px_3px_rgba(0,0,0,0.5)]" fill="#4460ff" stroke="#4460ff" strokeLinecap="round">
        <path d="M242 541L238 430M1416 676L1427 408M1498 714H1670" strokeWidth="10" />
        <path d="M236 393L252 430L221 431ZM1429 382L1440 410L1413 410ZM1697 714L1668 699V729Z" stroke="none" />
      </svg>
    </div>
  );
}

export default function App() {
  return (
    <main className={clsx('relative h-screen min-h-[1035px] w-full overflow-hidden bg-gradient-to-b from-[#001228] via-[#00284c] to-[#001a36] text-black', UI)}>
      <span className="absolute top-[256px] left-1 text-xs text-[#c8d0dc]">A</span>
      <svg viewBox="0 0 300 12" className="absolute top-[812px] left-0 h-3 w-[300px]">
        <ellipse cx="38" cy="12" rx="18" ry="9" fill="#b23c34" />
        <rect x="99" y="2" width="30" height="20" rx="7" fill="#0000c8" />
        <path d="M166 2h48v10h-48z" fill="#c4342c" />
        <rect x="246" y="2" width="40" height="20" rx="6" fill="#2a8c94" />
      </svg>
      <OutputWindow />
      <AlertsWindow />
      <ReplayWindow />
      <ControlCenter />
      <MarketAnalyzer />
      <ChartWindow />
      <Notes />
    </main>
  );
}
